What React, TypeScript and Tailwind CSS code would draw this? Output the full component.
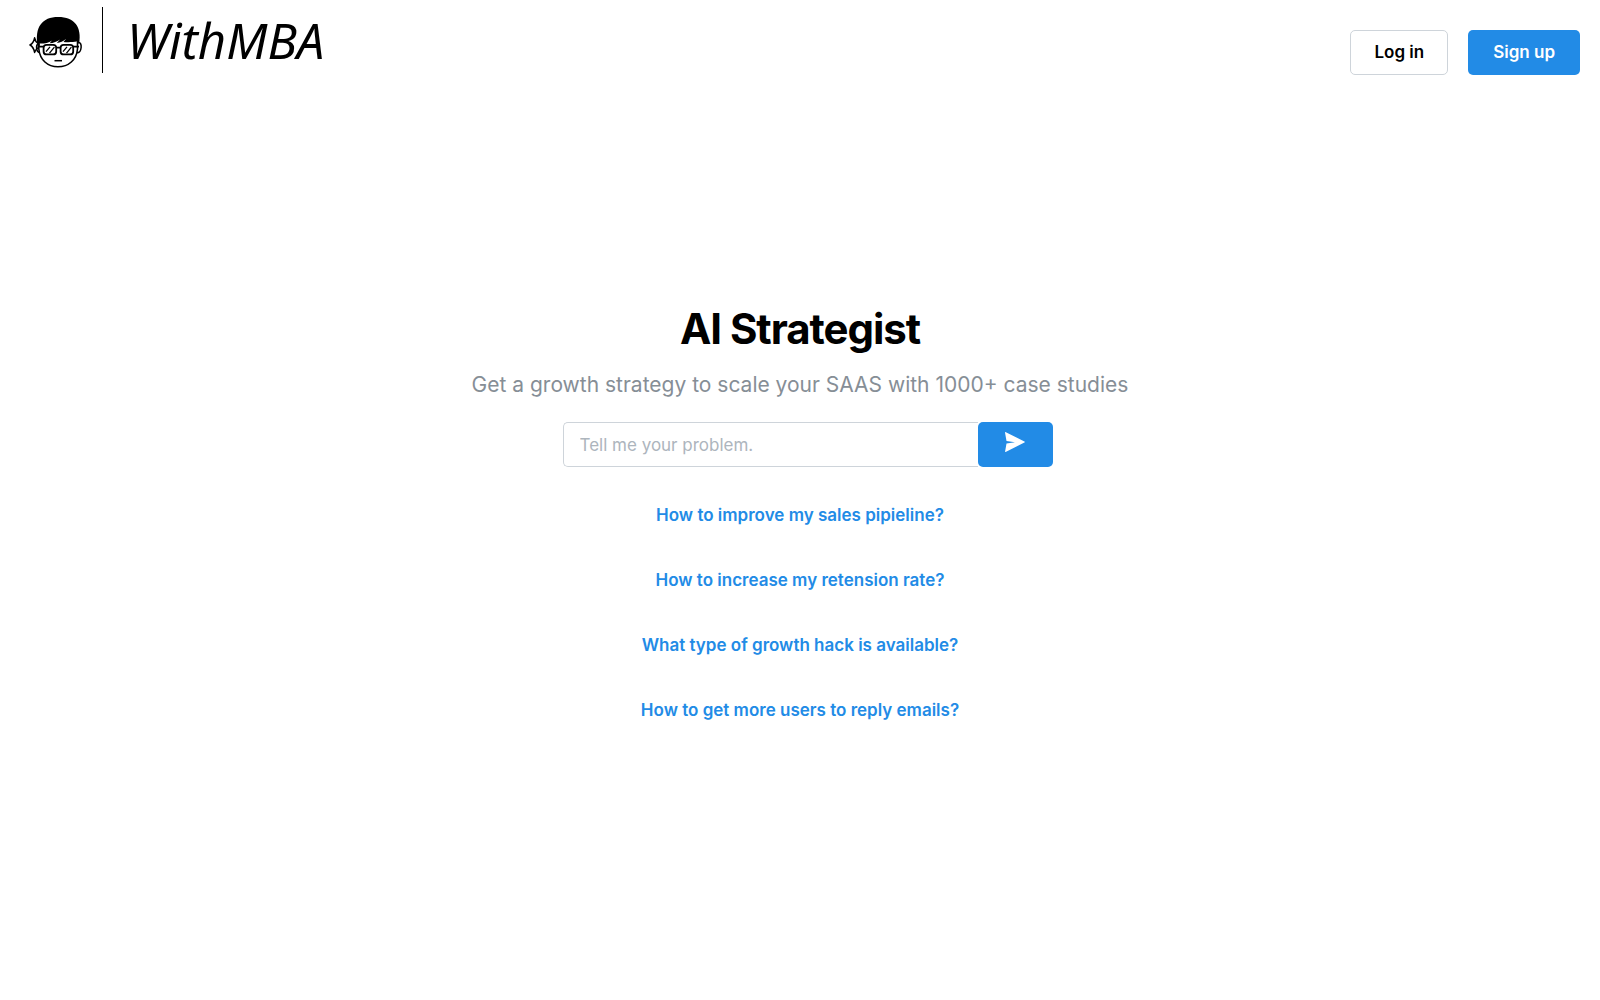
const questions = [
  'How to improve my sales pipieline?',
  'How to increase my retension rate?',
  'What type of growth hack is available?',
  'How to get more users to reply emails?',
]

function FaceLogo() {
  return (
    <svg viewBox="0 -6 54 60" className="h-[60px] w-[54px]" fill="none" stroke="#000" aria-hidden="true">
      {/* sparkle behind the ear */}
      <path
        d="M9 27.5 Q6.3 25.5 5.6 21.8 Q4.6 27 1 29 Q4.6 31 5.6 36.4 Q6.3 33.5 9.3 31.5"
        strokeWidth="1.5"
        strokeLinejoin="round"
      />
      {/* ears */}
      <path d="M9.5 28 C6.5 28.5 7 36.5 11 36.5" strokeWidth="1.5" />
      <path d="M49.5 26.5 C53.5 26 53 36.8 48 36.8" strokeWidth="1.5" />
      {/* jaw */}
      <path d="M9.8 28 V33 C11 44 18.5 50.8 29 50.8 C39.5 50.8 47.5 44 48.5 33 V26" strokeWidth="1.6" />
      {/* hair */}
      <path
        d="M8.6 30 C5.5 11 13 1 29.2 1 C45.5 1 53 11 50.2 27.5 L48.4 27.5 L47.8 25.6 C44 26.2 39 26.4 34.5 26 L37.2 22.8 C34 25.5 31.5 26.6 27.8 27 L31 23.4 C28 25.6 24.5 26.9 20.6 27.2 L23 24.4 C19.5 26.8 15 27.8 10.8 27.6 L10.6 30 Z"
        fill="#000"
        stroke="none"
      />
      {/* glasses */}
      <g strokeWidth="1.8">
        <rect x="14.6" y="28.8" width="12.6" height="9.6" rx="3" />
        <rect x="31.6" y="28.8" width="12.6" height="9.6" rx="3" />
        <path d="M27 31.6 H32 M8.5 30.6 H15 M44 30.6 H50" />
      </g>
      <path
        d="M17 35.6 L21 30.8 M20.5 37.2 L25.4 31.2 M34 35.6 L38 30.8 M37.5 37.2 L42.4 31.2"
        strokeWidth="1.3"
      />
      <path d="M25.5 44.7 H33" strokeWidth="1.5" />
    </svg>
  )
}

function SendIcon() {
  return (
    <svg viewBox="0 0 20 20" className="h-5 w-5" fill="#fff" aria-hidden="true">
      <path d="M0.4 0.1 L19.4 9.5 Q20.4 10 19.4 10.6 L0.6 19.9 Q0 20.1 0.1 19.4 L1.5 11.5 L10 10.2 L1.5 8.9 L0 0.5 Q0 0 0.4 0.1 Z" />
    </svg>
  )
}

export default function App() {
  return (
    <div className="min-h-screen bg-white font-['Inter',sans-serif] text-black">
      <header className="flex items-start justify-between pr-5 pl-[29px]">
        <a href="#" className="flex items-center pt-[7px]">
          <FaceLogo />
          <span className="ml-[19px] h-[66px] w-px bg-black" />
          <span className="ml-6 font-['Noto_Sans',sans-serif] text-[49px] leading-[66px] italic">WithMBA</span>
        </a>
        <div className="flex gap-5 pt-[30px]">
          <button className="h-[45px] rounded-[5px] border border-[#ced4da] bg-white px-[23px] text-[17px] font-semibold">
            Log in
          </button>
          <button className="h-[45px] rounded-[5px] bg-[#228be6] px-[25px] text-[17px] font-semibold text-white">
            Sign up
          </button>
        </div>
      </header>

      <main className="flex flex-col items-center pt-[224px]">
        <h1 className="text-[42px] leading-[60px] font-bold tracking-tight">AI Strategist</h1>
        <p className="mt-[10px] text-[21px] leading-8 text-[#868e96]">
          Get a growth strategy to scale your SAAS with 1000+ case studies
        </p>
        <form className="mt-[21px] ml-[15px] flex" onSubmit={(e) => e.preventDefault()}>
          <input
            type="text"
            aria-label="Your problem"
            placeholder="Tell me your problem."
            className="h-[45px] w-[415px] rounded-l-[5px] border border-r-0 border-[#ced4da] px-4 text-[17px] outline-none placeholder:text-[#adb5bd]"
          />
          <button
            type="submit"
            aria-label="Send"
            className="flex h-[45px] w-[75px] justify-center rounded-[5px] bg-[#228be6] pt-[10px]"
          >
            <SendIcon />
          </button>
        </form>
        <div className="mt-[26px] flex flex-col items-center gap-5">
          {questions.map((q) => (
            <button key={q} className="h-[45px] px-6 text-[17px] font-semibold text-[#228be6]">
              {q}
            </button>
          ))}
        </div>
      </main>
    </div>
  )
}
